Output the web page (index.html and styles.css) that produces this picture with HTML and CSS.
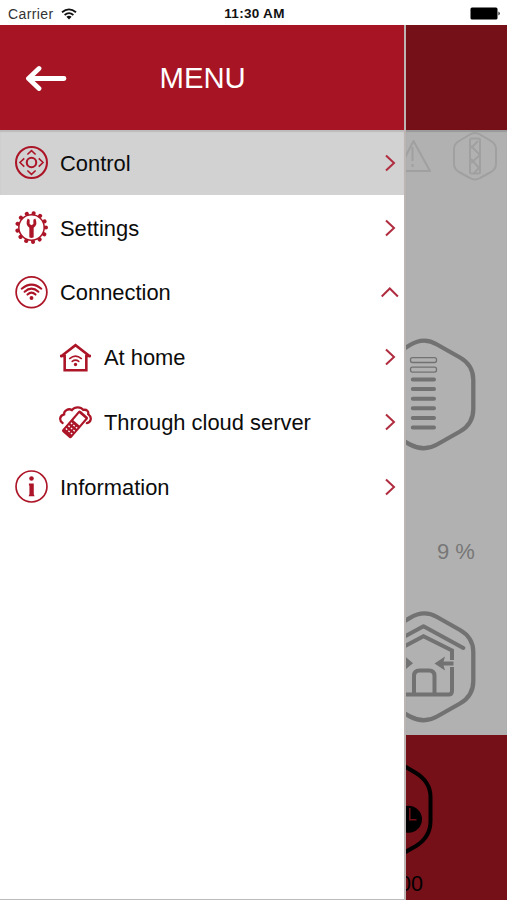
FILE: index.html
```html
<!DOCTYPE html>
<html lang="en">
<head>
<meta charset="utf-8">
<title>Menu</title>
<link rel="stylesheet" href="styles.css">
</head>
<body>
<div class="status">
  <div class="carrier"><span>Carrier</span>
    <svg width="16" height="12" viewBox="0 0 16 12" fill="none" stroke="#111" stroke-width="1.8"><path d="M1 4.300Q8-1.600 15 4.300M3.600 7Q8 3.300 12.400 7"/><path d="M5.400 8.800Q8 6.800 10.600 8.800L8 11.500Z" fill="#111" stroke="none"/></svg>
  </div>
  <div class="time">11:30 AM</div>
  <svg class="battery" width="31" height="13" viewBox="0 0 31 13"><rect x="0.500" y="0.500" width="27" height="12" rx="1.500"/><path d="M28.500 4.500q2.500 2 0 4z"/></svg>
</div>
<div class="screen">
  <nav class="drawer">
    <header class="head">
      <svg class="back" width="42" height="26" viewBox="0 0 42 26" fill="none" stroke="#fff" stroke-width="4.800" stroke-linecap="round" stroke-linejoin="round"><path d="M39 13.500H4M14 3.500L3.500 13.500L14 23.500"/></svg>
      <h1>MENU</h1>
    </header>
    <ul class="list">
      <li class="row active">
        <svg class="icon" viewBox="0 0 32 32"><circle cx="16" cy="16" r="15"/><circle cx="16" cy="16" r="4.600" stroke-width="2"/><path stroke-width="1.500" d="M12 8.200L16 4.500L20 8.200M12 23.800L16 27.500L20 23.800M9 12L4.800 16L9 20M23 12L27.200 16L23 20"/></svg>
        <span>Control</span>
        <svg class="chev" viewBox="0 0 18 18"><path d="M5 1.500L13 9L5 16.500"/></svg>
      </li>
      <li class="row">
        <svg class="icon" viewBox="0 0 32 32"><circle cx="16" cy="16" r="12.300" stroke-width="1.500"/><circle cx="16" cy="16" r="14" stroke-width="4" stroke-linecap="round" stroke-dasharray="0.010 6.756"/><path fill="#ac1527" stroke="none" d="M12.300 7.200L14.200 8.500V12.500L16 13.700L17.800 12.500V8.500L19.700 7.200Q22.500 13 18.100 16.200V25.500Q16 27 13.900 25.500V16.200Q9.500 13 12.300 7.200Z"/></svg>
        <span>Settings</span>
        <svg class="chev" viewBox="0 0 18 18"><path d="M5 1.500L13 9L5 16.500"/></svg>
      </li>
      <li class="row">
        <svg class="icon" viewBox="0 0 32 32"><circle cx="16" cy="15.800" r="14.900" stroke-width="1.700"/><path stroke-width="2" stroke-linecap="round" d="M6.500 12.300Q16 4.300 25.500 12.300M9.300 15.300Q16 9.300 22.700 15.300M12.100 18Q16 14.300 19.900 18"/><circle cx="16" cy="21.300" r="1.900" fill="#ac1527" stroke="none"/></svg>
        <span>Connection</span>
        <svg class="chev" viewBox="0 0 18 18"><path d="M0.700 13.500L8.800 5.500L16.900 13.500"/></svg>
      </li>
      <li class="row sub">
        <svg class="icon" viewBox="0 0 32 32"><path stroke-width="2.500" d="M1.500 15.300L16 4L30.500 15.300M1 14.500H5.500V28.300H26.500V14.500H31"/><path stroke-width="1.500" stroke-linecap="round" d="M10.300 17Q16 12.300 21.700 17M12.800 19.800Q16 17.300 19.200 19.800"/><circle cx="16" cy="22.800" r="1.600" fill="#ac1527" stroke="none"/></svg>
        <span>At home</span>
        <svg class="chev" viewBox="0 0 18 18"><path d="M5 1.500L13 9L5 16.500"/></svg>
      </li>
      <li class="row sub">
        <svg class="icon" viewBox="0 0 32 32"><path stroke-width="2.200" stroke-linecap="round" d="M3.500 16.500C.3 14.500 0 9.500 5 8.200C4.500 4 9.500 2 12.500 4C15.500.5 21 .5 23.500 3.800C27 3 29 5.500 28.300 7.800C32.500 11 31 16 27 16.500"/><g transform="translate(15.200 18.200) rotate(41)"><rect x="-6" y="-14" width="12" height="27" rx="1.800" fill="#ac1527" stroke="none"/><rect x="-3.900" y="-11.300" width="7.800" height="8.800" fill="#fff" stroke="none"/><path stroke="#fff" stroke-width="1.300" stroke-dasharray="1.700 1.500" d="M-4 1H4.500M-4 4.700H4.500M-4 8.400H4.500"/></g></svg>
        <span>Through cloud server</span>
        <svg class="chev" viewBox="0 0 18 18"><path d="M5 1.500L13 9L5 16.500"/></svg>
      </li>
      <li class="row">
        <svg class="icon" viewBox="0 0 32 32"><circle cx="16" cy="16" r="15" stroke-width="1.600"/><circle cx="16" cy="8.300" r="2.200" fill="#ac1527" stroke="none"/><path fill="#ac1527" stroke="none" d="M13.500 13H18.200V23.500L19 25.500H13.200L14 23.500V15H13.500Z"/></svg>
        <span>Information</span>
        <svg class="chev" viewBox="0 0 18 18"><path d="M5 1.500L13 9L5 16.500"/></svg>
      </li>
    </ul>
  </nav>
  <main class="page">
    <div class="page-head"></div>
    <div class="page-body">
      <svg class="alerts" width="101" height="60" viewBox="406 130 101 60" fill="none" stroke="#a0a0a0" stroke-width="2" stroke-linejoin="round"><path d="M398 171L413.500 141L430 171ZM412.500 147V161M412.500 164V167"/><path d="M470 134.500Q475 131.500 480 134.500L491 141Q496 144 496 149V164Q496 169 491 172L480 178Q475 181 470 178L459 172Q454 169 454 164V149Q454 144 459 141Z"/><rect x="470" y="138.500" width="10" height="35" rx="1.500"/><path d="M471 148L478 141M471 146L480 155L471 163M471 159L479 168L474 173"/></svg>
      <svg class="level" width="101" height="120" viewBox="406 335 101 120" fill="none" stroke="#727272" stroke-width="4.300"><path d="M400 351L410 345Q424 336.500 437 344.500L460 357.500Q473.300 365 473.300 380V409Q473.300 424 460 431.500L437 444.500Q424 452 410 444.500L400 439"/><g stroke-width="1.300"><rect x="410.500" y="357.600" width="26" height="4.900" rx="2"/><rect x="410.500" y="367.200" width="26" height="4.900" rx="2"/></g><path stroke-width="4" stroke-linecap="round" d="M412.800 379.500H434M412.800 389.100H434M412.800 398.700H434M412.800 408.200H434M412.800 417.900H434M412.800 427.500H434"/></svg>
      <div class="percent">9 %</div>
      <svg class="house" width="101" height="125" viewBox="406 605 101 125" fill="none" stroke="#727272" stroke-width="4.300"><path d="M400 624L410 617.800Q424 609.500 437 617L460 630Q473.300 637.500 473.300 652V681Q473.300 696 460 703.500L437 716.500Q424 724 410 716.500L400 711"/><path stroke-width="4" stroke-linecap="round" stroke-linejoin="round" d="M400 639L423.500 626.300L463.300 648"/><path stroke-width="4" d="M400 648.500L423.500 636.300L452 650.500V660M452 667V691Q452 694.500 448.500 694.500H400M414 694V676Q414 670.500 419.500 670.500H429Q434.500 670.500 434.500 676V694M438 663.500H453.500"/><path fill="#727272" stroke="none" d="M434.500 663.500L445 656.500L443 663.500L445 670.500ZM413 663.300L404 655.500V670.500Z"/></svg>
    </div>
    <footer class="page-foot">
      <svg width="101" height="105" viewBox="406 755 101 105" fill="none" stroke="#000" stroke-width="4"><path d="M400 763.500L416 773Q430.500 782 430.500 797V821Q430.500 837 416 846L400 855"/><circle cx="408.500" cy="819.200" r="13.500" fill="#000" stroke="none"/><path stroke="#751018" stroke-width="1.500" d="M409.800 808V819.700H416.500"/></svg>
      <div class="clock">00</div>
    </footer>
  </main>
</div>
</body>
</html>
```

FILE: styles.css
```css
* { box-sizing: border-box; }
body {
  margin: 0;
  width: 507px;
  height: 900px;
  display: flex;
  flex-direction: column;
  overflow: hidden;
  background: #fff;
  color: #0c0c0c;
  font-family: "Liberation Sans", Arial, sans-serif;
}
.status {
  height: 25px;
  display: grid;
  grid-template-columns: 1fr auto 1fr;
  align-items: center;
  padding: 2px 6px 0 8px;
  font-size: 14px;
  line-height: 20px;
}
.carrier { display: flex; align-items: center; gap: 7px; }
.carrier span { color: #333; letter-spacing: 0.4px; }
.time { font-weight: bold; font-size: 13.5px; letter-spacing: 0.3px; color: #111; }
.battery { justify-self: end; }
.screen { height: 875px; display: flex; }
.drawer {
  width: 406px;
  flex: none;
  border-right: 2px solid #bdb4b4;
  border-bottom: 1px solid #bbb;
}
.head {
  height: 105px;
  display: flex;
  align-items: center;
  padding-left: 25px;
  background: #a71423;
}
.head h1 {
  margin: 1px 0 0 92.5px;
  color: #fff;
  font-size: 29.3px;
  font-weight: normal;
  line-height: 34px;
}
.list { margin: 0; padding: 0; list-style: none; }
.row {
  height: 64.8px;
  display: flex;
  align-items: center;
  gap: 12px;
  padding: 1px 5px 0 15px;
  font-size: 21.9px;
}
.active {
  background: #d2d2d2;
  box-shadow: inset 0 2px 1px #bbb;
}
.sub { padding-left: 59px; }
.row span { flex: 1; white-space: nowrap; padding-top: 2px; }
.icon {
  width: 33px;
  height: 33px;
  flex: none;
  fill: none;
  stroke: #ac1527;
  stroke-width: 2;
}
.chev {
  width: 18px;
  height: 18px;
  flex: none;
  fill: none;
  stroke: #b02c3f;
  stroke-width: 2;
}
.page { flex: 1; overflow: hidden; }
.page svg { display: block; }
.page-head { height: 105px; background: #751018; }
.page-body {
  height: 605px;
  background: #b1b1b1;
  box-shadow: inset 0 2px 1px #9a9a9a;
}
.alerts { margin-bottom: 145px; }
.percent {
  margin: 83px 0 0 31px;
  height: 67px;
  color: #777;
  font-size: 22px;
  line-height: 27px;
}
.page-foot { height: 165px; padding-top: 20px; background: #751018; }
.clock {
  margin-left: -7px;
  color: #000;
  font-size: 21.5px;
  line-height: 26px;
  padding-top: 11px;
}
```
